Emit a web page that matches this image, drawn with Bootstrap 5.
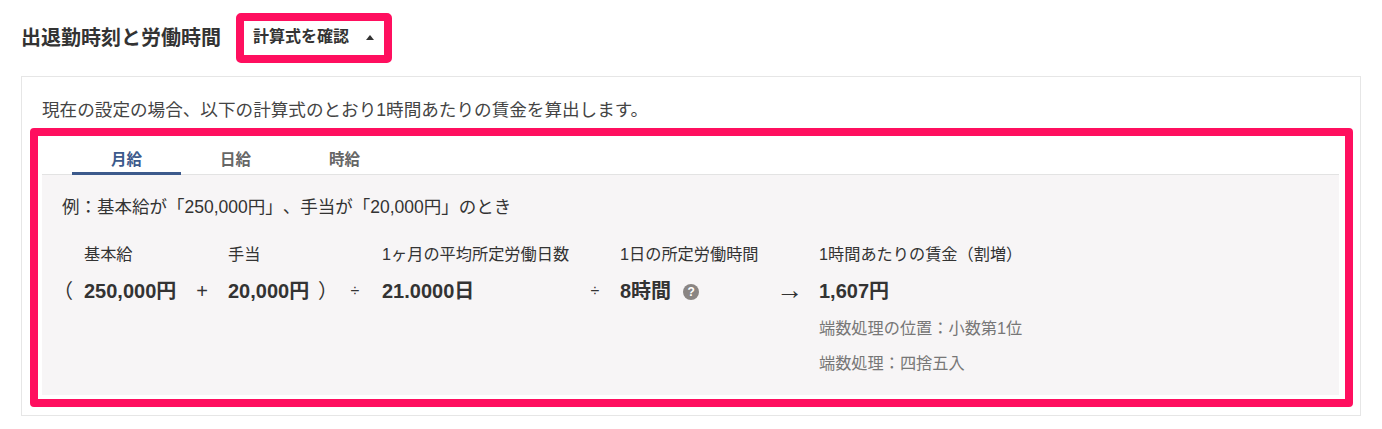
<!doctype html>
<html lang="ja"><head><meta charset="utf-8">
<link href="https://cdn.jsdelivr.net/npm/bootstrap@5.3.0/dist/css/bootstrap.min.css" rel="stylesheet">
<style>
html,body{background:#fff;overflow:hidden}
body{font-family:"Liberation Sans","Noto Sans CJK JP",sans-serif;color:#333;font-size:16px;text-spacing-trim:space-all}
.page-wrap{padding:13px 21px 0}
.head-row{height:50px;margin-bottom:13px}
.head-title{font-size:20px;font-weight:700;margin:0 15px 0 0;padding-top:0;line-height:26px;color:#333;width:200px;white-space:nowrap}
.calc-toggle{width:156px;height:50px;border:8px solid #ff0f5f;border-radius:5px;background:#fff;font-size:16px;font-weight:700;color:#333;padding:0 0 2px 9px}
.caret-up{width:0;height:0;border-left:4.5px solid transparent;border-right:4.5px solid transparent;border-bottom:5px solid #333;margin-left:17px;margin-top:1px}
.outer-box{width:1340px;height:340px;border:1px solid #e6e6e6;padding:21px 8px 0}
.lead-text{font-size:17.6px;margin:0 0 5px 12px;line-height:25px;color:#444;white-space:nowrap}
.hl-box{width:1323px;height:279px;border:8px solid #ff0f5f;border-radius:4px;padding:0 6px 4px 4px;background:#fff}
.tab-row{height:39px;padding-left:30px;border-bottom:1px solid #e3e3e3}
.tab-item{width:109px;text-align:center;font-size:15.5px;font-weight:700;color:#666;padding-top:13px;line-height:22px}
.tab-item.on{color:#3c5a8c;border-bottom:3px solid #3c5a8c;height:39px}
.panel{background:#f7f5f6;height:220px;padding:19px 20px 0}
.ex-text{font-size:17.5px;margin-bottom:22px;line-height:26px;white-space:nowrap}
.calc-col{display:flex;flex-direction:column}
.w-open{width:22px}.w-base{width:92px}.w-plus{width:52px}.w-allow{width:90px}.w-close{width:10px}.w-div1{width:54px}
.w-days{width:188px}.w-div2{width:50px}.w-hours{width:140px}.w-arrow{width:59px}
.lbl{height:24px;line-height:24px;font-size:16.2px;margin-bottom:13px;white-space:nowrap}
.val{height:24px;line-height:24px;font-size:20px;font-weight:700;white-space:nowrap}
.op{height:24px;line-height:24px;font-size:16px;text-align:center}
.op-wide{font-size:20px}
.op-open{text-align:left;margin-left:-9px}
.op-close{text-align:left}
.op-arrow{font-size:27px;font-family:"Liberation Sans",sans-serif;line-height:22px}
.note{font-size:16.2px;color:#777;line-height:24px;white-space:nowrap}
.note-first{margin-top:13px}
.note-next{margin-top:11px}
.help-dot{display:inline-flex;width:16px;height:16px;border-radius:50%;background:#8a8583;color:#fff;font-size:12px;align-items:center;justify-content:center;margin-left:12px;vertical-align:2px}
</style></head><body>
<div class="page-wrap">
 <div class="head-row d-flex align-items-center">
  <h2 class="head-title">出退勤時刻と労働時間</h2>
  <button class="calc-toggle d-flex align-items-center" type="button">計算式を確認<span class="caret-up"></span></button>
 </div>
 <div class="outer-box">
  <p class="lead-text">現在の設定の場合、以下の計算式のとおり1時間あたりの賃金を算出します。</p>
  <div class="hl-box">
   <div class="tab-row d-flex">
    <div class="tab-item on">月給</div><div class="tab-item">日給</div><div class="tab-item">時給</div>
   </div>
   <div class="panel">
    <div class="ex-text">例：基本給が「250,000円」、手当が「20,000円」のとき</div>
    <div class="d-flex">
     <div class="calc-col w-open"><div class="lbl"></div><div class="op op-wide op-open">（</div></div>
     <div class="calc-col w-base"><div class="lbl">基本給</div><div class="val">250,000円</div></div>
     <div class="calc-col w-plus"><div class="lbl"></div><div class="op op-wide">+</div></div>
     <div class="calc-col w-allow"><div class="lbl">手当</div><div class="val">20,000円</div></div>
     <div class="calc-col w-close"><div class="lbl"></div><div class="op op-wide op-close">）</div></div>
     <div class="calc-col w-div1"><div class="lbl"></div><div class="op">÷</div></div>
     <div class="calc-col w-days"><div class="lbl">1ヶ月の平均所定労働日数</div><div class="val">21.0000日</div></div>
     <div class="calc-col w-div2"><div class="lbl"></div><div class="op">÷</div></div>
     <div class="calc-col w-hours"><div class="lbl">1日の所定労働時間</div><div class="val">8時間<span class="help-dot">?</span></div></div>
     <div class="calc-col w-arrow"><div class="lbl"></div><div class="op op-arrow">→</div></div>
     <div class="calc-col"><div class="lbl">1時間あたりの賃金（割増）</div><div class="val">1,607円</div>
      <div class="note note-first">端数処理の位置：小数第1位</div><div class="note note-next">端数処理：四捨五入</div></div>
    </div>
   </div>
  </div>
 </div>
</div>
</body></html>
